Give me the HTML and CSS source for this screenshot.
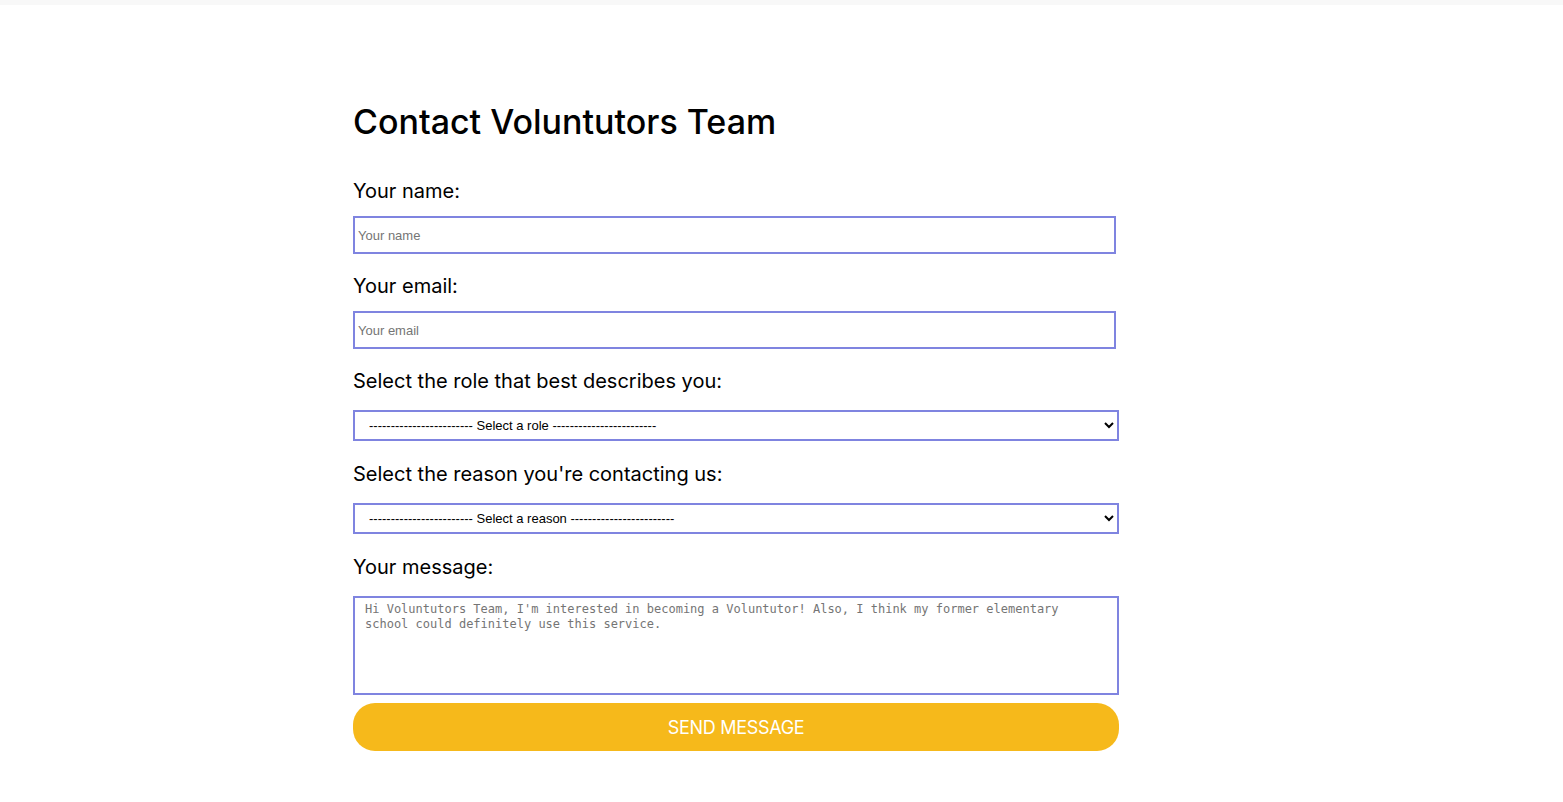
FILE: index.html
```html
<!DOCTYPE html>
<html lang="en">
<head>
<meta charset="utf-8">
<title>Contact Voluntutors Team</title>
<link rel="stylesheet" href="styles.css">
</head>
<body>
<div class="topbar"></div>
<main class="page">
  <form class="contact">
    <h1 class="title">Contact Voluntutors Team</h1>
    <label class="label" for="name">Your name:</label>
    <input class="field" id="name" type="text" placeholder="Your name">
    <label class="label" for="email">Your email:</label>
    <input class="field" id="email" type="email" placeholder="Your email">
    <label class="label" for="role">Select the role that best describes you:</label>
    <select class="choice" id="role">
      <option>------------------------ Select a role ------------------------</option>
    </select>
    <label class="label" for="reason">Select the reason you're contacting us:</label>
    <select class="choice" id="reason">
      <option>------------------------ Select a reason ------------------------</option>
    </select>
    <label class="label" for="msg">Your message:</label>
    <textarea class="message" id="msg" placeholder="Hi Voluntutors Team, I'm interested in becoming a Voluntutor! Also, I think my former elementary school could definitely use this service."></textarea>
    <button class="send" type="button">SEND MESSAGE</button>
  </form>
</main>
</body>
</html>
```
FILE: styles.css
```css
html, body {
  margin: 0;
  padding: 0;
  background: #ffffff;
}
body {
  font-family: "Inter", "Noto Sans", sans-serif;
  color: #000;
}
.topbar {
  height: 5px;
  background: #f8f8f8;
}
.page {
  padding-left: 353px;
  padding-top: 90px;
}
.contact {
  width: 766px;
  display: flex;
  flex-direction: column;
  align-items: flex-start;
}
.title {
  margin: 0 0 30px 0;
  font-size: 34px;
  font-weight: 500;
  line-height: 54px;
  letter-spacing: 0;
}
.label {
  font-size: 20px;
  line-height: 24px;
  font-weight: 400;
  margin-bottom: 13px;
}
.field {
  box-sizing: border-box;
  width: 763px;
  height: 38px;
  border: 2px solid #7f84e0;
  border-radius: 0;
  padding: 0 3px;
  margin: 0 0 20px 0;
  font-family: "Liberation Sans", Arial, sans-serif;
  font-size: 13px;
  outline: none;
}
.field::placeholder { color: #757575; }
.choice {
  box-sizing: border-box;
  width: 766px;
  height: 31px;
  border: 2px solid #7f84e0;
  border-radius: 0;
  background: #fff;
  padding: 0 10px;
  margin: 4px 0 21px 0;
  font-family: "Liberation Sans", Arial, sans-serif;
  font-size: 13px;
  color: #000;
}
.message {
  box-sizing: border-box;
  width: 766px;
  height: 99px;
  border: 2px solid #7f84e0;
  border-radius: 0;
  padding: 4px 10px;
  margin: 4px 0 8px 0;
  font-family: "DejaVu Sans Mono", "Liberation Mono", monospace;
  font-size: 12px;
  line-height: 15px;
  resize: none;
  outline: none;
}
.message::placeholder { color: #757575; }
.send {
  width: 766px;
  height: 48px;
  border: none;
  border-radius: 22px;
  background: #f6b91b;
  color: #fff;
  font-family: "Inter", "Noto Sans", sans-serif;
  font-size: 18px;
  letter-spacing: -0.3px;
  cursor: pointer;
}
```
